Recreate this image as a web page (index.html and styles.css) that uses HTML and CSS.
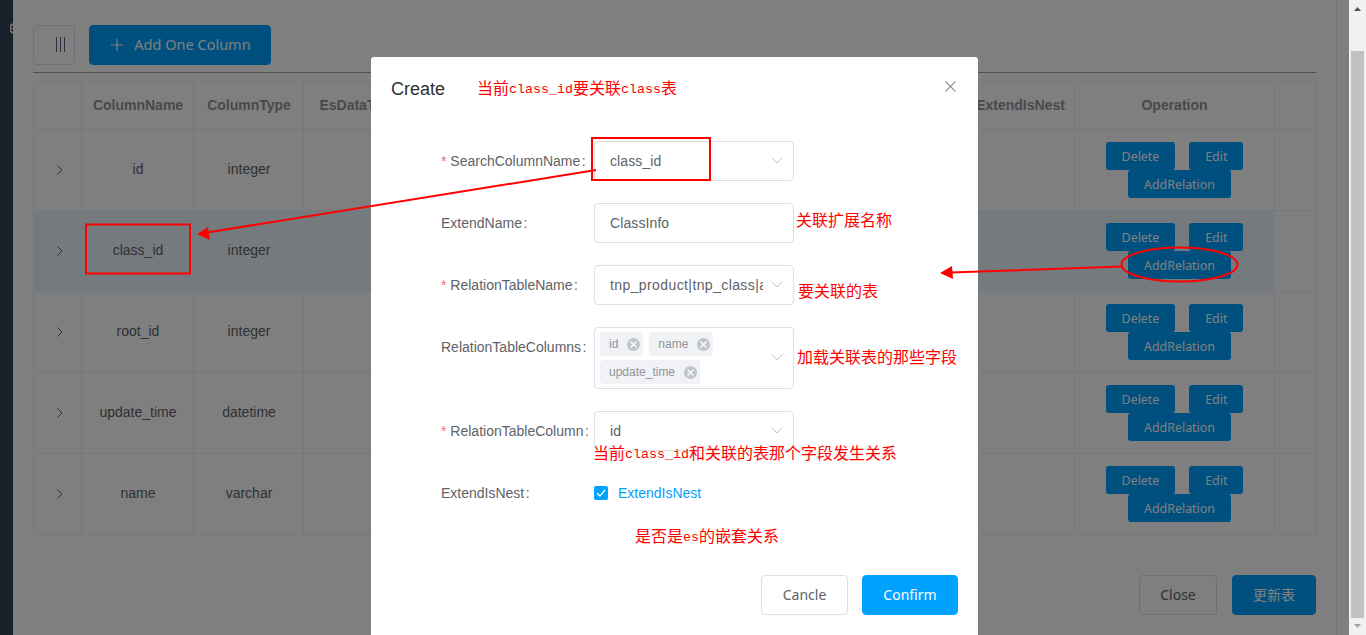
FILE: index.html
```html
<!DOCTYPE html>
<html>
<head>
<meta http-equiv="Content-Type" content="text/html; charset=utf-8"/>
<title>Create</title>
<link rel="stylesheet" href="styles.css">
</head>

<body>
<div class="app">
  <div class="sidebar">
    <svg class="sidebar-mark" width="3" height="11" viewBox="0 0 3 11"><path d="M3 1.2A4.5 4.5 0 0 0 3 9.8" fill="none" stroke="#e8e8e8" stroke-width="2"/><path d="M0 5.5h3" stroke="#e8e8e8"/></svg>
  </div>

  <div class="main">
    <div class="panel">
      <div class="toolbar">
        <button class="btn-icon"><svg width="10" height="15" viewBox="0 0 10 15"><path d="M1.5 0v15M5.5 0v15M9.5 0v15" stroke="#556080" stroke-width="1"/></svg></button>
        <button class="btn btn-primary btn-add"><svg width="12" height="12" viewBox="0 0 12 12"><path d="M6 0v12M0 6h12" stroke="#fff" stroke-width="1.2"/></svg>Add One Column</button>
      </div>
      <div class="divider"></div>

      <table class="grid">
        <colgroup>
          <col class="c-expand"><col class="c-name"><col class="c-110"><col class="c-110"><col class="c-111"><col class="c-111"><col class="c-111"><col class="c-110"><col class="c-110"><col class="c-nest"><col class="c-op"><col class="c-end">
        </colgroup>
        <thead>
          <tr>
            <th></th><th>ColumnName</th><th>ColumnType</th><th>EsDataType</th><th></th><th></th><th></th><th></th><th></th><th class="flush">ExtendIsNest</th><th class="flush">Operation</th><th></th>
          </tr>
        </thead>
        <tbody>
          <tr>
            <td><svg class="chevron" width="6" height="10" viewBox="0 0 6 10"><path d="M.5.5 5 5 .5 9.500" fill="none" stroke="#606266"/></svg></td>
            <td>id</td><td>integer</td><td></td><td></td><td></td><td></td><td></td><td></td><td></td>
            <td class="ops"><button class="btn-sm">Delete</button> <button class="btn-sm next">Edit</button> <button class="btn-sm next">AddRelation</button></td>
            <td></td>
          </tr>
          <tr class="current">
            <td><svg class="chevron" width="6" height="10" viewBox="0 0 6 10"><path d="M.5.5 5 5 .5 9.500" fill="none" stroke="#606266"/></svg></td>
            <td>class_id</td><td>integer</td><td></td><td></td><td></td><td></td><td></td><td></td><td></td>
            <td class="ops"><button class="btn-sm">Delete</button> <button class="btn-sm next">Edit</button> <button class="btn-sm next">AddRelation</button></td>
            <td class="end"></td>
          </tr>
          <tr>
            <td><svg class="chevron" width="6" height="10" viewBox="0 0 6 10"><path d="M.5.5 5 5 .5 9.500" fill="none" stroke="#606266"/></svg></td>
            <td>root_id</td><td>integer</td><td></td><td></td><td></td><td></td><td></td><td></td><td></td>
            <td class="ops"><button class="btn-sm">Delete</button> <button class="btn-sm next">Edit</button> <button class="btn-sm next">AddRelation</button></td>
            <td></td>
          </tr>
          <tr>
            <td><svg class="chevron" width="6" height="10" viewBox="0 0 6 10"><path d="M.5.5 5 5 .5 9.500" fill="none" stroke="#606266"/></svg></td>
            <td>update_time</td><td>datetime</td><td></td><td></td><td></td><td></td><td></td><td></td><td></td>
            <td class="ops"><button class="btn-sm">Delete</button> <button class="btn-sm next">Edit</button> <button class="btn-sm next">AddRelation</button></td>
            <td></td>
          </tr>
          <tr>
            <td><svg class="chevron" width="6" height="10" viewBox="0 0 6 10"><path d="M.5.5 5 5 .5 9.500" fill="none" stroke="#606266"/></svg></td>
            <td>name</td><td>varchar</td><td></td><td></td><td></td><td></td><td></td><td></td><td></td>
            <td class="ops"><button class="btn-sm">Delete</button> <button class="btn-sm next">Edit</button> <button class="btn-sm next">AddRelation</button></td>
            <td></td>
          </tr>
        </tbody>
      </table>

      <div class="panel-footer">
        <button class="btn btn-plain btn-close">Close</button>
        <button class="btn btn-primary btn-update">更新表</button>
      </div>
    </div>
  </div>

  <div class="scrollbar">
    <svg width="7" height="4" viewBox="0 0 7 4"><path d="M3.500 0 7 4H0z" fill="#505050"/></svg>
    <div class="scroll-thumb"></div>
    <svg width="7" height="4" viewBox="0 0 7 4"><path d="M0 0h7L3.500 4z" fill="#a3a3a3"/></svg>
  </div>
</div>

<div class="mask">
  <div class="modal">
    <div class="modal-header">
      <span class="modal-title">Create</span>
      <svg class="modal-close" width="11" height="11" viewBox="0 0 11 11"><path d="M.5.5l10 10M10.500.5l-10 10" stroke="#909399" stroke-width="1.1"/></svg>
    </div>

    <div class="modal-body">
      <div class="form-row">
        <label class="form-label"><span class="star">*</span> SearchColumnName<span class="colon">:</span></label>
        <div class="control"><span class="value">class_id</span>
          <svg class="arrow" width="12" height="7" viewBox="0 0 12 7"><path d="M.5.5 6 6 11.500.5" fill="none" stroke="#c0c4cc"/></svg></div>
      </div>
      <div class="form-row">
        <label class="form-label">ExtendName<span class="colon">:</span></label>
        <div class="control"><span class="value">ClassInfo</span></div>
      </div>
      <div class="form-row">
        <label class="form-label"><span class="star">*</span> RelationTableName<span class="colon">:</span></label>
        <div class="control"><span class="value value-long">tnp_product|tnp_class|add</span>
          <svg class="arrow" width="12" height="7" viewBox="0 0 12 7"><path d="M.5.5 6 6 11.500.5" fill="none" stroke="#c0c4cc"/></svg></div>
      </div>
      <div class="form-row">
        <label class="form-label">RelationTableColumns<span class="colon">:</span></label>
        <div class="control control-multi">
          <div class="tags">
            <span class="tag">id<i class="tag-x"><svg width="7" height="7" viewBox="0 0 7 7"><path d="M.5.5l6 6M6.500.5l-6 6" stroke="#fff" stroke-width="1.3"/></svg></i></span>
            <span class="tag">name<i class="tag-x"><svg width="7" height="7" viewBox="0 0 7 7"><path d="M.5.5l6 6M6.500.5l-6 6" stroke="#fff" stroke-width="1.3"/></svg></i></span>
            <span class="tag">update_time<i class="tag-x"><svg width="7" height="7" viewBox="0 0 7 7"><path d="M.5.5l6 6M6.500.5l-6 6" stroke="#fff" stroke-width="1.3"/></svg></i></span>
          </div>
          <svg class="arrow" width="12" height="7" viewBox="0 0 12 7"><path d="M.5.5 6 6 11.500.5" fill="none" stroke="#c0c4cc"/></svg>
        </div>
      </div>
      <div class="form-row">
        <label class="form-label"><span class="star">*</span> RelationTableColumn<span class="colon">:</span></label>
        <div class="control"><span class="value">id</span>
          <svg class="arrow" width="12" height="7" viewBox="0 0 12 7"><path d="M.5.5 6 6 11.500.5" fill="none" stroke="#c0c4cc"/></svg></div>
      </div>
      <div class="form-row">
        <label class="form-label">ExtendIsNest<span class="colon">:</span></label>
        <div class="check">
          <span class="check-box"><svg width="10" height="8" viewBox="0 0 10 8"><path d="M1 4l3 3 5-6" fill="none" stroke="#fff" stroke-width="1.200"/></svg></span>
          <span class="check-label">ExtendIsNest</span>
        </div>
      </div>
    </div>

    <div class="modal-footer">
      <button class="btn btn-plain btn-cancel">Cancle</button>
      <button class="btn btn-bright btn-confirm">Confirm</button>
    </div>
  </div>
</div>

<!-- red notes drawn on top of the screenshot -->
<svg class="marks" width="1366" height="635" viewBox="0 0 1366 635">
  <g fill="none" stroke="#f00" stroke-width="2">
    <rect x="592" y="138" width="118" height="42"/>
    <rect x="86" y="224.500" width="104" height="49"/>
    <ellipse cx="1179.500" cy="264.500" rx="58" ry="17"/>
    <path d="M596 170 207 232.500M1122 266.500 950 272.500"/>
  </g>
  <path d="M197 234 208 227 210 240zM940 273 952 266 953 279z" fill="#f00"/>
</svg>
<div class="note note-1">当前<span class="latin">class_id</span>要关联<span class="latin">class</span>表</div>
<div class="note note-2">关联扩展名称</div>
<div class="note note-3">要关联的表</div>
<div class="note note-4">加载关联表的那些字段</div>
<div class="note note-5">当前<span class="latin">class_id</span>和关联的表那个字段发生关系</div>
<div class="note note-6">是否是<span class="latin">es</span>的嵌套关系</div>
</body>

</html>
```

FILE: styles.css
```css
html, body {
   margin: 0;
   height: 100%;
   overflow: hidden;
}

body {
   font-family: "Liberation Sans", "Noto Sans CJK SC", sans-serif;
   font-size: 14px;
   color: #606266;
   background-color: white;
}

button {
   font-family: "Noto Sans", "Noto Sans CJK SC", sans-serif;
   cursor: pointer;
}

.app {
   display: flex;
   height: 635px;
}

.sidebar {
   width: 13px;
   flex: none;
   background-color: #304156;
   display: flex;
   justify-content: flex-end;
   align-items: flex-start;
}

.sidebar-mark {
   margin-top: 23px;
}

.main {
   flex: 1;
   min-width: 0;
}

.panel {
   width: 1283px;
   height: 635px;
   padding: 25px 20px 0;
   border-right: 1px solid #e4e7ed;
}

.toolbar {
   display: flex;
   gap: 14px;
}

.btn-icon {
   width: 42px;
   height: 40px;
   padding: 2px 0 0 12px;
   background: white;
   border: 1px solid #dcdfe6;
   border-radius: 4px;
}

.btn {
   height: 40px;
   padding: 0 0 2px;
   border-radius: 4px;
   font-size: 14px;
}

.btn-primary {
   background-color: #00a0ff;
   border: 1px solid #00a0ff;
   color: white;
}

.btn-bright {
   background-color: #00a2ff;
   border: 1px solid #00a2ff;
   color: white;
}

.btn-plain {
   background-color: white;
   border: 1px solid #dcdfe6;
   color: #606266;
}

.btn-add {
   width: 182px;
   padding-left: 2px;
   font-size: 14.5px;
   display: flex;
   align-items: center;
   justify-content: center;
   gap: 11px;
}

.btn-add svg {
   margin-top: 2px;
}

.divider {
   height: 1px;
   margin-top: 7px;
   background-color: #a0a0a0;
}

.grid {
   width: 1283px;
   margin-top: 8px;
   table-layout: fixed;
   border-collapse: collapse;
}

.c-expand { width: 48px; }
.c-name { width: 112px; }
.c-110 { width: 110px; }
.c-111 { width: 111px; }
.c-nest { width: 108px; }
.c-op { width: 200px; }
.c-end { width: 42px; }

.grid th, .grid td {
   padding: 0 0 1px 1px;
   border: 1px solid #ebeef5;
   text-align: center;
   box-sizing: border-box;
}

.grid th {
   height: 48px;
   color: #909399;
   font-weight: bold;
}

.grid th.flush {
   padding-left: 0;
}

.grid td {
   height: 81px;
   padding-bottom: 2px;
}

.grid td.ops {
   padding: 0;
   line-height: 28px;
}

.current td {
   background-color: #ebf5ff;
   border-color: #ebf5ff;
}

.current td.end {
   background-color: white;
   border-color: #ebeef5;
}

.chevron {
   display: block;
   margin: 2px 0 0 22px;
}

.btn-sm {
   height: 28px;
   padding: 0 16px;
   vertical-align: top;
   background-color: #00a0ff;
   border: 0;
   border-radius: 3px;
   color: white;
   font-size: 12.4px;
}

.btn-sm.next {
   margin-left: 10px;
}

.panel-footer {
   display: flex;
   justify-content: flex-end;
   gap: 15px;
   margin-top: 40px;
}

.btn-close { width: 78px; }
.btn-update { width: 84px; }

.scrollbar {
   width: 17px;
   flex: none;
   display: flex;
   flex-direction: column;
   align-items: center;
   padding-top: 7px;
   box-sizing: border-box;
   background-color: #f1f1f1;
}

.scroll-thumb {
   width: 13px;
   height: 567px;
   margin: 40px 0 6px;
   background-color: #c1c1c1;
}

/* dialog */
.mask {
   position: absolute;
   left: 0;
   top: 0;
   width: 1349px;
   height: 635px;
   overflow: hidden;
   background-color: rgba(0, 0, 0, 0.5);
}

.modal {
   width: 607px;
   height: 640px;
   margin: 57px auto 0;
   background-color: white;
   border-radius: 3px;
}

.modal-header {
   display: flex;
   justify-content: space-between;
   padding: 20px 22px 0 20px;
}

.modal-title {
   font-size: 18px;
   line-height: 24px;
   color: #303133;
}

.modal-close {
   margin-top: 4px;
}

.modal-body {
   padding: 40px 0 0 70px;
}

.form-row {
   display: flex;
   margin-bottom: 22px;
}

.form-label {
   width: 153px;
   flex: none;
   line-height: 40px;
   white-space: nowrap;
}

.star {
   color: #f56c6c;
}

.colon {
   margin-left: 1.5px;
}

.control {
   position: relative;
   width: 200px;
   min-height: 40px;
   box-sizing: border-box;
   padding: 0 30px 0 15px;
   border: 1px solid #dcdfe6;
   border-radius: 4px;
   line-height: 38px;
   overflow: hidden;
}

.value {
   display: block;
   overflow: hidden;
   white-space: nowrap;
   letter-spacing: 0.1px;
}

.value-long {
   letter-spacing: 0.4px;
}

.arrow {
   position: absolute;
   right: 10px;
   top: 50%;
   margin-top: -4px;
}

.control-multi {
   padding: 4px 30px 4px 5px;
   line-height: normal;
}

.tags {
   display: flex;
   flex-wrap: wrap;
   gap: 4px 6px;
}

.tag {
   display: flex;
   align-items: center;
   gap: 9px;
   height: 24px;
   padding: 0 3px 0 9px;
   box-sizing: border-box;
   background-color: #f0f2f5;
   border-radius: 4px;
   color: #909399;
   font-size: 12px;
}

.tag-x {
   display: flex;
   align-items: center;
   justify-content: center;
   width: 13px;
   height: 13px;
   border-radius: 50%;
   background-color: #c0c4cc;
}

.check {
   display: flex;
   align-items: center;
   gap: 10px;
   height: 40px;
}

.check-box {
   display: flex;
   align-items: center;
   justify-content: center;
   width: 14px;
   height: 14px;
   border-radius: 2px;
   background-color: #00a2ff;
}

.check-label {
   color: #00a2ff;
}

.modal-footer {
   display: flex;
   justify-content: flex-end;
   gap: 14px;
   padding: 40px 20px 0 0;
}

.btn-cancel { width: 87px; }
.btn-confirm { width: 96px; }

/* annotations */
.marks {
   position: absolute;
   left: 0;
   top: 0;
}

.note {
   position: absolute;
   color: #f00;
   font-family: "Noto Sans CJK SC", sans-serif;
   font-size: 16px;
   line-height: 20px;
   white-space: nowrap;
}

.latin {
   font-family: "Liberation Mono", monospace;
   font-size: 13.33px;
   position: relative;
   top: -1px;
}

.note-1 { left: 477px; top: 77px; }
.note-2 { left: 796px; top: 209px; }
.note-3 { left: 798px; top: 280px; }
.note-4 { left: 797px; top: 346px; }
.note-5 { left: 593px; top: 442px; }
.note-6 { left: 635px; top: 525px; }
```
